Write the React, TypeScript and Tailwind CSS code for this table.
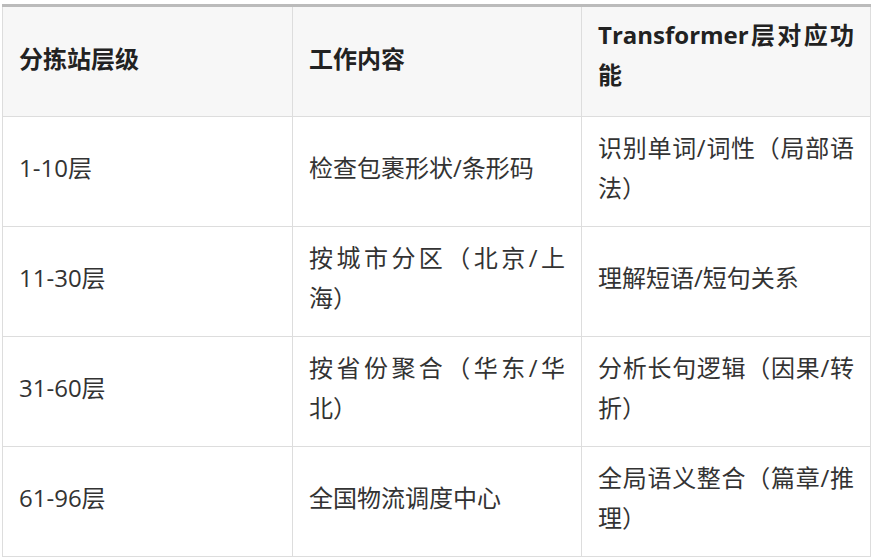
const rows = [
  { level: "1-10层", work: "检查包裹形状/条形码", func: "识别单词/词性（局部语法）" },
  { level: "11-30层", work: "按城市分区（北京/上海）", func: "理解短语/短句关系" },
  { level: "31-60层", work: "按省份聚合（华东/华北）", func: "分析长句逻辑（因果/转折）" },
  { level: "61-96层", work: "全国物流调度中心", func: "全局语义整合（篇章/推理）" },
];

const cell = "border border-[#dddddd] px-4 align-middle text-justify";
const head = `${cell} border-t-[3px] border-t-[#bbbbbb] font-bold text-[#222222]`;

export default function App() {
  return (
    <div
      className="bg-white w-[876px] h-[559px] pl-[2px] pt-[4px] [text-spacing-trim:space-all]"
      style={{ fontFamily: '"Open Sans", "Noto Sans CJK SC", sans-serif' }}
    >
      <table className="w-[868px] table-fixed border-collapse text-[24px] leading-[40px] text-[#333333]">
        <colgroup>
          <col className="w-[290px]" />
          <col className="w-[289px]" />
          <col className="w-[289px]" />
        </colgroup>
        <thead>
          <tr className="bg-[#f7f7f7]">
            <th className={`${head} pt-[12px] pb-[17px]`}>分拣站层级</th>
            <th className={`${head} pt-[12px] pb-[17px]`}>工作内容</th>
            <th className={`${head} pt-[8px] pb-[21px]`}>Transformer层对应功能</th>
          </tr>
        </thead>
        <tbody>
          {rows.map((r) => (
            <tr key={r.level}>
              <td className={`${cell} pt-[11px] pb-[18px]`}>{r.level}</td>
              <td className={`${cell} pt-[11px] pb-[18px]`}>{r.work}</td>
              <td className={`${cell} pt-[11px] pb-[18px]`}>{r.func}</td>
            </tr>
          ))}
        </tbody>
      </table>
    </div>
  );
}
